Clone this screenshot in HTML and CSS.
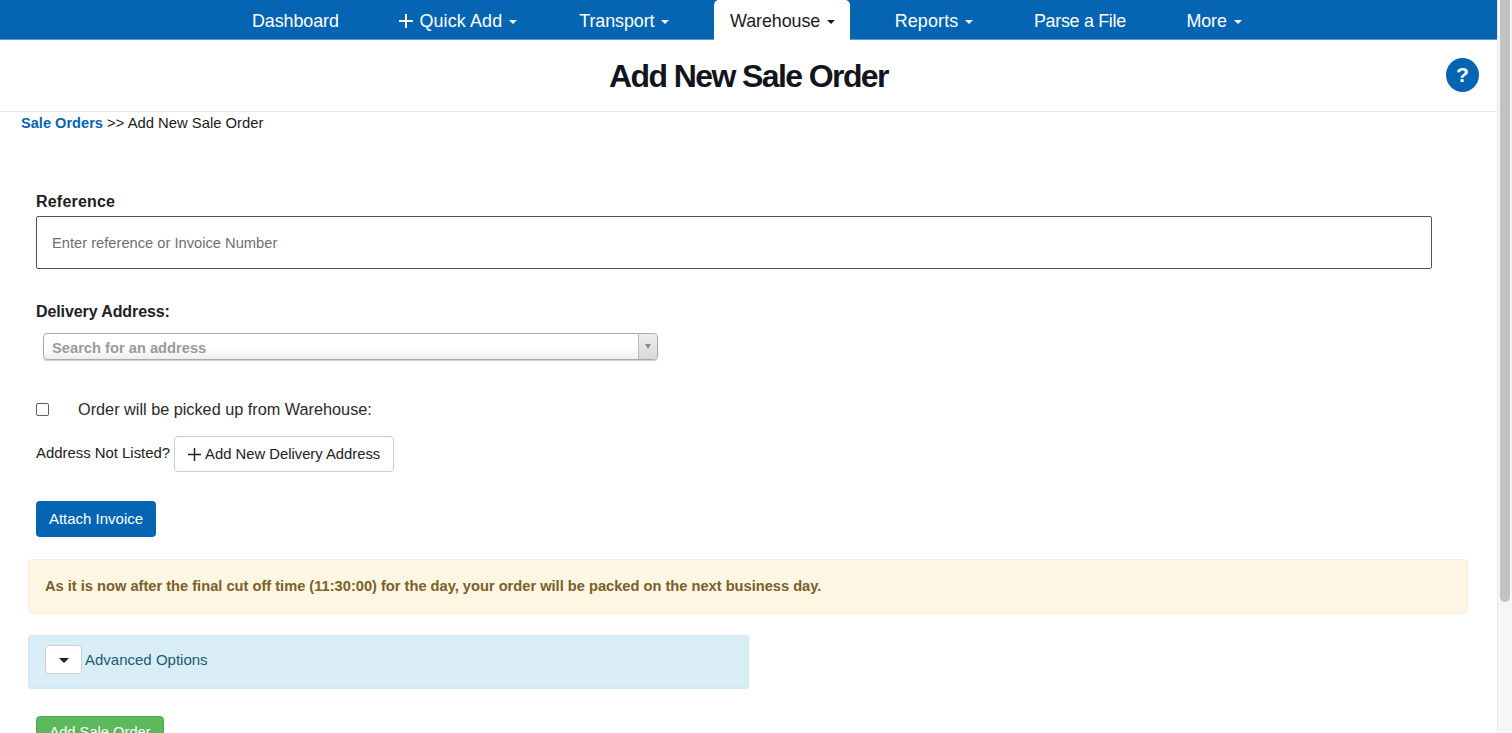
FILE: index.html
```html
<!DOCTYPE html>
<html lang="en">
<head>
<meta charset="utf-8">
<title>Add New Sale Order</title>
<link rel="stylesheet" href="styles.css">
</head>
<body>
<div class="shell">
  <div class="page">
    <nav class="nav">
      <a class="tab">Dashboard</a>
      <a class="tab tab-wide tab-quick"><svg class="plus" viewBox="0 0 14 14"><path d="M7 0v14M0 7h14"/></svg>Quick Add<span class="caret"></span></a>
      <a class="tab">Transport<span class="caret"></span></a>
      <a class="tab active">Warehouse<span class="caret"></span></a>
      <a class="tab tab-wide">Reports<span class="caret"></span></a>
      <a class="tab tab-tight">Parse a File</a>
      <a class="tab">More<span class="caret"></span></a>
    </nav>
    <header class="head">
      <h1 class="title">Add New Sale Order</h1>
      <span class="help">?</span>
    </header>
    <div class="crumbs"><a class="crumb-link">Sale Orders</a> &gt;&gt; Add New Sale Order</div>
    <form class="form">
      <label class="lab lab-ref">Reference</label>
      <input class="ref" type="text" placeholder="Enter reference or Invoice Number">
      <label class="lab lab-addr">Delivery Address:</label>
      <div class="select"><span class="select-text">Search for an address</span><span class="select-btn"><span class="select-arrow"></span></span></div>
      <div class="pick"><input class="check" type="checkbox"><span class="pick-text">Order will be picked up from Warehouse:</span></div>
      <div class="notlisted"><span>Address Not Listed?</span><button class="btn-add" type="button"><svg class="plus-dark" viewBox="0 0 14 14"><path d="M7 0v14M0 7h14"/></svg>Add New Delivery Address</button></div>
      <button class="btn-attach" type="button">Attach Invoice</button>
    </form>
    <div class="warn">As it is now after the final cut off time (11:30:00) for the day, your order will be packed on the next business day.</div>
    <div class="info"><span class="toggle"><span class="toggle-caret"></span></span>Advanced Options</div>
    <button class="btn-save" type="button">Add Sale Order</button>
  </div>
  <div class="scrollbar"><div class="thumb"></div></div>
</div>
</body>
</html>
```
FILE: styles.css
```css
* { box-sizing: border-box; }
html, body { margin: 0; height: 100%; overflow: hidden; background: #fff; }
body { font-family: "Liberation Sans", Arial, sans-serif; color: #212121; font-size: 14px; }
.shell { display: flex; height: 733px; overflow: hidden; }
.page { flex: 1; min-width: 0; }
.scrollbar { width: 15px; background: #f6f6f6; border-left: 1px solid #e8e8e8; padding: 0 2px 0 2px; }
.thumb { width: 10px; height: 602px; background: #c2c2c2; border-radius: 0 0 5px 5px; }

.nav { height: 40px; background: #0565b2; border-bottom: 1px solid #5a9bd0; display: flex; padding-left: 236px; gap: 28.6px; }
.tab { height: 40px; padding: 2px 16px 0; display: flex; align-items: center; color: #fff; font-size: 17.9px; letter-spacing: -0.08px; }
.tab-wide { letter-spacing: 0.15px; }
.tab-tight { letter-spacing: -0.3px; }
.tab-quick { padding-right: 17.4px; }
.tab.active { background: #fff; color: #1c1c1c; border-radius: 5px 5px 0 0; width: 136px; }
.plus { width: 14px; height: 14px; margin-right: 6px; }
.plus path { stroke: #fff; stroke-width: 2; fill: none; }
.caret { width: 0; height: 0; margin-left: 7px; margin-top: 2px; border-left: 4.5px solid transparent; border-right: 4.5px solid transparent; border-top: 4.5px solid currentColor; }

.head { height: 72px; border-bottom: 1px solid #e7e7e7; position: relative; display: flex; justify-content: center; align-items: center; }
.title { margin: 2px 0 0 0; font-size: 32px; font-weight: 700; color: #12151c; letter-spacing: -1.6px; }
.help { position: absolute; left: 1446px; top: 18px; width: 33px; height: 34px; border-radius: 50%; background: #0565b2; color: #fff; font-weight: 700; font-size: 21px; display: flex; align-items: center; justify-content: center; }

.crumbs { padding: 3px 0 0 21px; height: 62px; font-size: 14.8px; line-height: 17px; color: #1a1a1a; }
.crumb-link { color: #0565b2; font-weight: 700; font-size: 14.6px; }

.form { padding-left: 36px; display: flex; flex-direction: column; align-items: flex-start; }
.lab { font-weight: 700; font-size: 16px; line-height: 20px; color: #212121; }
.lab-ref { margin-top: 18px; letter-spacing: 0.2px; }
.ref { margin-top: 4px; width: 1396px; height: 53px; border: 1px solid #555; border-radius: 2px; padding: 0 15px; font: 14.7px "Liberation Sans", Arial, sans-serif; outline: none; }
.ref::placeholder { color: #6f6f6f; opacity: 1; }
.lab-addr { margin-top: 33px; letter-spacing: -0.1px; }
.select { margin: 11px 0 0 7px; width: 615px; height: 27px; border: 1px solid #aaa; border-radius: 4px; background: linear-gradient(#fff 55%, #eee); display: flex; justify-content: space-between; box-shadow: 0 1px 1px #ccc; }
.select-text { padding: 1px 0 0 8px; font-size: 14.7px; font-weight: 700; color: #9a9a9a; line-height: 27px; }
.select-btn { width: 19px; border-left: 1px solid #bbb; background: linear-gradient(#eee, #d8d8d8); display: flex; align-items: center; justify-content: center; border-radius: 0 3px 3px 0; }
.select-arrow { width: 0; height: 0; border-left: 3px solid transparent; border-right: 3px solid transparent; border-top: 5px solid #888; }
.pick { margin-top: 40px; height: 20px; display: flex; align-items: center; font-size: 16.25px; color: #2a2a2a; }
.pick-text { margin-bottom: 2px; }
.check { width: 13px; height: 13px; margin: 0 29px 2px 0; appearance: none; border: 1px solid #5f5f5f; border-radius: 2px; background: #fff; }
.notlisted { margin-top: 16px; display: flex; align-items: center; font-size: 14.9px; color: #222; }
.notlisted span { margin-bottom: 3px; }
.btn-add { margin-left: 4px; width: 220px; height: 36px; background: #fff; border: 1px solid #ccc; border-radius: 4px; font: 14.8px "Liberation Sans", Arial, sans-serif; color: #222; display: flex; align-items: center; padding: 0 0 0 13px; }
.plus-dark { width: 13px; height: 13px; margin-right: 4px; }
.plus-dark path { stroke: #222; stroke-width: 1.6; fill: none; }
.btn-attach { margin-top: 29px; width: 120px; height: 36px; border: 0; border-radius: 4px; background: #0565b2; color: #fff; font: 15px "Liberation Sans", Arial, sans-serif; padding: 0 0 2px; }

.warn { margin: 22px 0 0 28px; width: 1440px; height: 55px; background: #fdf6e3; border: 1px solid #faeed8; border-radius: 4px; padding-left: 16px; line-height: 53px; font-weight: 700; font-size: 14.65px; color: #7a6029; }
.info { margin: 21px 0 0 28px; width: 721px; height: 54px; background: #d9edf7; border: 1px solid #cfe9f2; border-bottom-width: 2px; border-radius: 4px; padding: 0 0 4px 16px; display: flex; align-items: center; font-size: 15px; color: #22596f; }
.toggle { width: 37px; height: 29px; margin-right: 3px; background: #fff; border: 1px solid #ccc; border-radius: 4px; display: flex; align-items: center; justify-content: center; }
.toggle-caret { width: 0; height: 0; margin-top: 2px; border-left: 5px solid transparent; border-right: 5px solid transparent; border-top: 5px solid #222; }
.btn-save { display: block; margin: 27px 0 0 36px; width: 128px; height: 36px; border: 1px solid #4cae4c; border-radius: 4px; background: #5cb85c; color: #fff; font: 14.7px "Liberation Sans", Arial, sans-serif; padding: 0 0 4px; }
```
